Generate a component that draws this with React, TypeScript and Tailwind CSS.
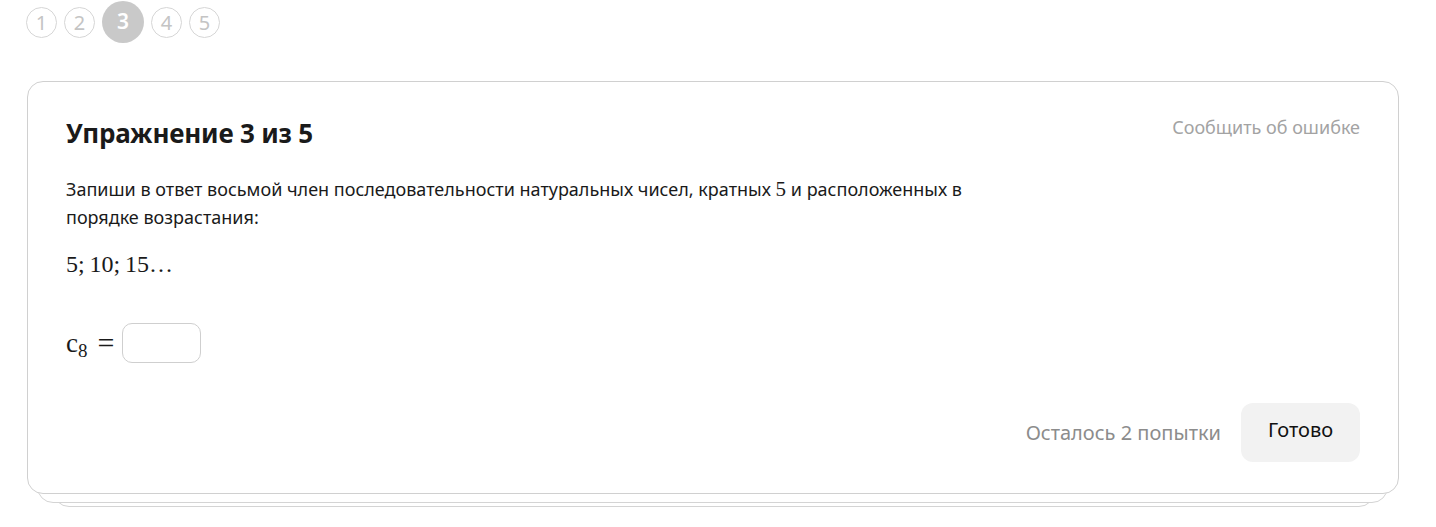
import React from "react";

const steps = [1, 2, 3, 4, 5];
const current = 3;

function StepDots() {
  return (
    <div className="flex h-[44px] items-center gap-[7px] pl-[26px]">
      {steps.map((n) =>
        n === current ? (
          <div
            key={n}
            className="grid size-[42px] place-items-center rounded-full bg-[#c9c9c9] text-[21px] font-semibold text-white"
          >
            {n}
          </div>
        ) : (
          <div
            key={n}
            className="grid size-[31px] place-items-center rounded-full border border-[#d6d6d6] text-[20px] text-[#c4c4c4]"
          >
            {n}
          </div>
        )
      )}
    </div>
  );
}

export default function App() {
  return (
    <div
      className="min-h-[527px] bg-white text-[#1a1a1a]"
      style={{ fontFamily: '"Noto Sans", "Open Sans", sans-serif' }}
    >
      <StepDots />

      <div className="relative ml-[27px] mt-[37px] w-[1372px]">
        <div className="absolute bottom-[-13px] left-[26px] right-[24px] h-[40px] rounded-b-[16px] border border-[#d4d4d4] bg-white" />
        <div className="absolute bottom-[-9px] left-[10px] right-[11px] h-[40px] rounded-b-[16px] border border-[#d4d4d4] bg-white" />

        <div className="relative flex h-[413px] flex-col rounded-[16px] border border-[#d0d0d0] bg-white px-[38px] pt-[33px]">
          <div className="flex items-start justify-between">
            <h1 className="text-[26px] font-bold leading-[36px] tracking-[-0.2px]">
              Упражнение 3 из 5
            </h1>
            <a className="-mt-[1px] text-[18px] text-[#a3a3a3]">Сообщить об ошибке</a>
          </div>

          <p className="mt-[24px] w-[920px] text-[18px] leading-[28px]">
            Запиши в ответ восьмой член последовательности натуральных чисел, кратных{" "}
            <span
              className="inline-block text-[21px] leading-none"
              style={{ fontFamily: '"Liberation Serif", serif' }}
            >
              5
            </span>{" "}
            и расположенных в порядке возрастания:
          </p>

          <div
            className="mt-[18px] text-[24px] leading-[30px]"
            style={{ fontFamily: '"Liberation Serif", serif' }}
          >
            5;&thinsp;10;&thinsp;15…
          </div>

          <div
            className="mt-[44px] flex items-center text-[27px]"
            style={{ fontFamily: '"Liberation Serif", serif' }}
          >
            <span>
              c<sub className="text-[19px]">8</sub>
            </span>
            <span className="ml-[10px] text-[30px] leading-[30px]">=</span>
            <div className="ml-[8px] h-[40px] w-[79px] rounded-[10px] border border-[#cfcfcf]" />
          </div>

          <div className="mt-auto mb-[31px] flex items-center justify-end gap-[20px]">
            <span className="text-[20px] text-[#8c8c8c]">Осталось 2 попытки</span>
            <button className="h-[59px] w-[119px] rounded-[12px] bg-[#f2f2f2] pb-[6px] text-[20px] text-[#111]">
              Готово
            </button>
          </div>
        </div>
      </div>
    </div>
  );
}
